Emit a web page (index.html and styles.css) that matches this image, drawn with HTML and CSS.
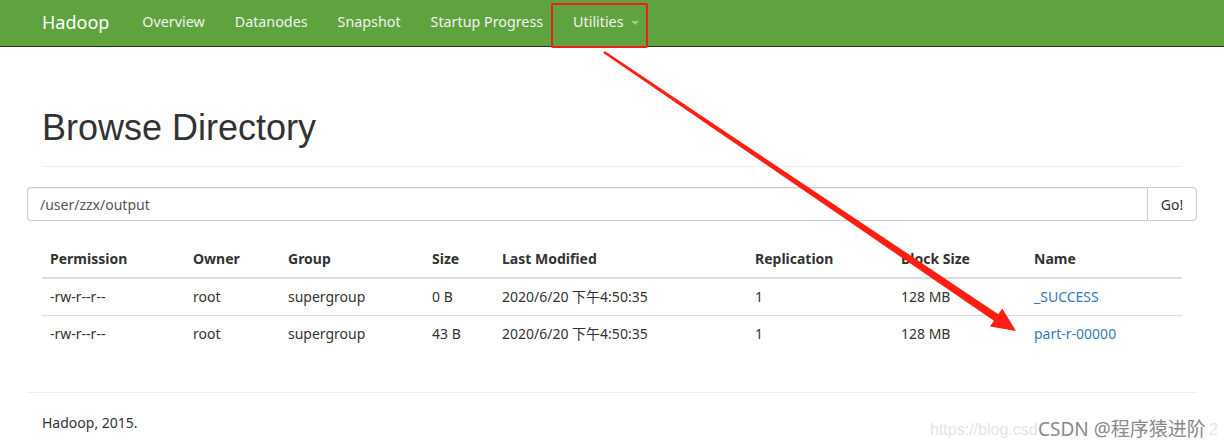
FILE: index.html
```html
<!DOCTYPE html>
<html lang="en">
<head>
    <meta charset="utf-8">
    <title>Browsing HDFS</title>
    <link rel="stylesheet" href="styles.css">
</head>
<body>
    <!-- TOP NAV -->
    <header class="navbar">
        <div class="nav-inner">
            <a class="brand" href="#">Hadoop</a>
            <ul class="nav">
                <li><a href="#">Overview</a></li>
                <li><a href="#">Datanodes</a></li>
                <li><a href="#">Snapshot</a></li>
                <li><a href="#">Startup Progress</a></li>
                <li class="dropdown"><a href="#">Utilities <span class="caret"></span></a></li>
            </ul>
        </div>
    </header>

    <div class="container">
        <div class="page-header">
            <h1>Browse Directory</h1>
        </div>

        <form class="input-group" action="#">
            <input type="text" class="path-input" value="/user/zzx/output">
            <button type="button" class="go-btn">Go!</button>
        </form>

        <table class="table">
            <colgroup>
                <col class="c-perm"><col class="c-owner"><col class="c-group"><col class="c-size">
                <col class="c-mod"><col class="c-rep"><col class="c-block"><col class="c-name">
            </colgroup>
            <thead>
                <tr>
                    <th>Permission</th><th>Owner</th><th>Group</th><th>Size</th>
                    <th>Last Modified</th><th>Replication</th><th>Block Size</th><th>Name</th>
                </tr>
            </thead>
            <tbody>
                <tr>
                    <td>-rw-r--r--</td><td>root</td><td>supergroup</td><td>0 B</td>
                    <td>2020/6/20 下午4:50:35</td><td>1</td><td>128 MB</td><td><a href="#">_SUCCESS</a></td>
                </tr>
                <tr>
                    <td>-rw-r--r--</td><td>root</td><td>supergroup</td><td>43 B</td>
                    <td>2020/6/20 下午4:50:35</td><td>1</td><td>128 MB</td><td><a href="#">part-r-00000</a></td>
                </tr>
            </tbody>
        </table>

        <hr class="footer-rule">
        <footer class="footer">
            <p>Hadoop, 2015.</p>
        </footer>
    </div>

    <!-- ANNOTATIONS OVER THE SCREENSHOT -->
    <div class="mark-box"></div>
    <svg class="arrow" width="1224" height="447" viewBox="0 0 1224 447">
        <polygon fill="#ff1f12" points="604.7,51 998.3,314.2 1002.3,308.4 1016,331 989.9,326.6 993.9,320.8 603.3,53"/>
    </svg>
    <div class="watermark">
        <span class="wm-url">https://blog.csd</span>
        <span class="wm-name">CSDN @程序猿进阶</span>
        <span class="wm-tail">2</span>
    </div>
</body>
</html>
```

FILE: styles.css
```css
html, body {
    margin: 0;
    padding: 0;
}
body {
    font-family: "Noto Sans", "Noto Sans CJK SC", sans-serif;
    font-size: 14px;
    line-height: 20px;
    color: #333;
    background: #fff;
    position: relative;
    width: 1224px;
    height: 447px;
    overflow: hidden;
}
a {
    color: #337ab7;
    text-decoration: none;
}

/* navbar */
.navbar {
    background: #5fa33e;
    border-bottom: 1px solid #1e3f0f;
    height: 46px;
}
.nav-inner {
    display: flex;
    align-items: center;
    height: 46px;
    padding-left: 42px;
}
.brand {
    color: #fff;
    font-size: 18px;
    line-height: 44px;
    margin-bottom: 2px;
    margin-right: 18px;
}
.nav {
    display: flex;
    list-style: none;
    margin: 0;
    padding: 0;
}
.nav a {
    display: block;
    padding: 0 15px;
    color: #f1f1f1;
    font-size: 14.3px;
    line-height: 44px;
    margin-bottom: 2px;
}
.caret {
    display: inline-block;
    width: 0;
    height: 0;
    margin-left: 4px;
    vertical-align: middle;
    border-top: 4px solid #9fcc88;
    border-left: 4px solid transparent;
    border-right: 4px solid transparent;
}

/* main */
.container {
    width: 1170px;
    margin-left: 27px;
}
.page-header {
    margin: 0 15px;
    padding-top: 61px;
    padding-bottom: 18px;
    border-bottom: 1px solid #eee;
}
.page-header h1 {
    margin: 0;
    font-family: "Liberation Sans", Arial, sans-serif;
    font-weight: normal;
    font-size: 36px;
    line-height: 40px;
    color: #333;
}
.input-group {
    display: flex;
    margin: 20px 0 20px;
    height: 34px;
}
.path-input {
    flex: 1;
    box-sizing: border-box;
    height: 34px;
    margin: 0;
    padding: 0 12px;
    font-family: inherit;
    font-size: 14px;
    color: #555;
    border: 1px solid #ccc;
    border-right: 0;
    border-radius: 4px 0 0 4px;
    box-shadow: inset 0 1px 1px rgba(0,0,0,0.075);
}
.go-btn {
    box-sizing: border-box;
    width: 50px;
    height: 34px;
    margin: 0;
    font-family: inherit;
    font-size: 14px;
    color: #333;
    background: #fff;
    border: 1px solid #ccc;
    border-radius: 0 4px 4px 0;
}

/* table */
.table {
    width: 1140px;
    margin: 0 15px;
    border-collapse: collapse;
    table-layout: fixed;
}
.c-perm { width: 143px; }
.c-owner { width: 95px; }
.c-group { width: 144px; }
.c-size { width: 70px; }
.c-mod { width: 253px; }
.c-rep { width: 146px; }
.c-block { width: 133px; }
.c-name { width: 156px; }
.table th, .table td {
    padding: 8px;
    text-align: left;
    line-height: 20px;
    white-space: nowrap;
}
.table th {
    font-weight: bold;
    border-bottom: 2px solid #ddd;
}
.table td {
    border-top: 1px solid #ddd;
}

.footer-rule {
    margin: 40px 0 20px;
    border: 0;
    border-top: 1px solid #eee;
}
.footer {
    padding: 0 15px;
}
.footer p {
    margin: 0;
}

/* screenshot markup */
.mark-box {
    position: absolute;
    left: 551px;
    top: 3px;
    width: 93px;
    height: 41px;
    border: 2px solid #f01d1d;
    border-radius: 2px;
}
.arrow {
    position: absolute;
    left: 0;
    top: 0;
    pointer-events: none;
}
.watermark {
    position: absolute;
    left: 930px;
    top: 416px;
    height: 26px;
    width: 294px;
    white-space: nowrap;
}
.wm-url, .wm-tail {
    position: absolute;
    top: 4px;
    font-family: "Liberation Sans", Arial, sans-serif;
    font-size: 16px;
    color: #e4e4e4;
}
.wm-url {
    left: 0;
}
.wm-tail {
    left: 279px;
}
.wm-name {
    position: absolute;
    left: 108px;
    top: 0;
    font-family: "Noto Sans", "Noto Sans CJK SC", sans-serif;
    font-size: 19px;
    line-height: 26px;
    color: #8a8a8a;
}
```
